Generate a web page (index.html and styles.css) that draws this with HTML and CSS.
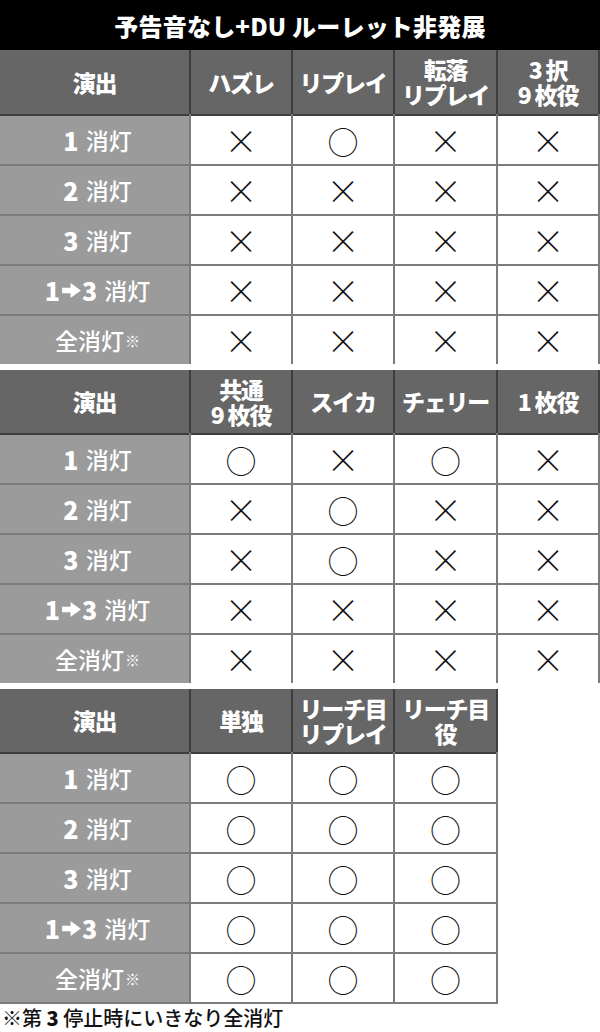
FILE: index.html
```html
<!DOCTYPE html>
<html lang="ja">
<head>
<meta charset="utf-8">
<title>予告音なし+DU ルーレット非発展</title>
<link rel="stylesheet" href="styles.css">
</head>
<body>
<div class="title">予告音なし+DU ルーレット非発展</div>

<div class="tbl c5 first">
  <div class="h">演出</div>
  <div class="h">ハズレ</div>
  <div class="h">リプレイ</div>
  <div class="h"><span class="ln">転落</span><span class="ln">リプレイ</span></div>
  <div class="h"><span class="ln">3&nbsp;択</span><span class="ln">9&nbsp;枚役</span></div>

  <div class="lb"><b>1</b>&nbsp;消灯</div>
  <div class="c"><span class="x">×</span></div><div class="c"><span class="o">○</span></div><div class="c"><span class="x">×</span></div><div class="c"><span class="x">×</span></div>
  <div class="lb"><b>2</b>&nbsp;消灯</div>
  <div class="c"><span class="x">×</span></div><div class="c"><span class="x">×</span></div><div class="c"><span class="x">×</span></div><div class="c"><span class="x">×</span></div>
  <div class="lb"><b>3</b>&nbsp;消灯</div>
  <div class="c"><span class="x">×</span></div><div class="c"><span class="x">×</span></div><div class="c"><span class="x">×</span></div><div class="c"><span class="x">×</span></div>
  <div class="lb"><b>1</b><svg class="arr" viewBox="0 0 20 16"><path d="M0 5h9V0l11 8-11 8v-5H0z"/></svg><b>3</b>&nbsp;消灯</div>
  <div class="c"><span class="x">×</span></div><div class="c"><span class="x">×</span></div><div class="c"><span class="x">×</span></div><div class="c"><span class="x">×</span></div>
  <div class="lb all">全消灯<span class="kome">※</span></div>
  <div class="c"><span class="x">×</span></div><div class="c"><span class="x">×</span></div><div class="c"><span class="x">×</span></div><div class="c"><span class="x">×</span></div>
</div>

<div class="tbl c5">
  <div class="h">演出</div>
  <div class="h"><span class="ln">共通</span><span class="ln">9&nbsp;枚役</span></div>
  <div class="h">スイカ</div>
  <div class="h">チェリー</div>
  <div class="h">1&nbsp;枚役</div>

  <div class="lb"><b>1</b>&nbsp;消灯</div>
  <div class="c"><span class="o">○</span></div><div class="c"><span class="x">×</span></div><div class="c"><span class="o">○</span></div><div class="c"><span class="x">×</span></div>
  <div class="lb"><b>2</b>&nbsp;消灯</div>
  <div class="c"><span class="x">×</span></div><div class="c"><span class="o">○</span></div><div class="c"><span class="x">×</span></div><div class="c"><span class="x">×</span></div>
  <div class="lb"><b>3</b>&nbsp;消灯</div>
  <div class="c"><span class="x">×</span></div><div class="c"><span class="o">○</span></div><div class="c"><span class="x">×</span></div><div class="c"><span class="x">×</span></div>
  <div class="lb"><b>1</b><svg class="arr" viewBox="0 0 20 16"><path d="M0 5h9V0l11 8-11 8v-5H0z"/></svg><b>3</b>&nbsp;消灯</div>
  <div class="c"><span class="x">×</span></div><div class="c"><span class="x">×</span></div><div class="c"><span class="x">×</span></div><div class="c"><span class="x">×</span></div>
  <div class="lb all">全消灯<span class="kome">※</span></div>
  <div class="c"><span class="x">×</span></div><div class="c"><span class="x">×</span></div><div class="c"><span class="x">×</span></div><div class="c"><span class="x">×</span></div>
</div>

<div class="tbl c4">
  <div class="h">演出</div>
  <div class="h">単独</div>
  <div class="h"><span class="ln">リーチ目</span><span class="ln">リプレイ</span></div>
  <div class="h"><span class="ln">リーチ目</span><span class="ln">役</span></div>

  <div class="lb"><b>1</b>&nbsp;消灯</div>
  <div class="c"><span class="o">○</span></div><div class="c"><span class="o">○</span></div><div class="c"><span class="o">○</span></div>
  <div class="lb"><b>2</b>&nbsp;消灯</div>
  <div class="c"><span class="o">○</span></div><div class="c"><span class="o">○</span></div><div class="c"><span class="o">○</span></div>
  <div class="lb"><b>3</b>&nbsp;消灯</div>
  <div class="c"><span class="o">○</span></div><div class="c"><span class="o">○</span></div><div class="c"><span class="o">○</span></div>
  <div class="lb"><b>1</b><svg class="arr" viewBox="0 0 20 16"><path d="M0 5h9V0l11 8-11 8v-5H0z"/></svg><b>3</b>&nbsp;消灯</div>
  <div class="c"><span class="o">○</span></div><div class="c"><span class="o">○</span></div><div class="c"><span class="o">○</span></div>
  <div class="lb all">全消灯<span class="kome">※</span></div>
  <div class="c"><span class="o">○</span></div><div class="c"><span class="o">○</span></div><div class="c"><span class="o">○</span></div>
</div>

<p class="note">※第 <b>3</b> 停止時にいきなり全消灯</p>
</body>
</html>
```

FILE: styles.css
```css
html, body {
  margin: 0;
  padding: 0;
  background: #fff;
}
body {
  width: 600px;
  font-family: "Noto Sans CJK JP", "Noto Sans", sans-serif;
  color: #fff;
}
.title {
  height: 50px;
  background: #000;
  color: #fff;
  font-size: 24px;
  font-weight: 900;
  display: flex;
  align-items: center;
  justify-content: center;
  letter-spacing: 0.2px;
}
.tbl {
  display: grid;
  gap: 2px;
  background: #7b7b7b;
  padding-right: 2px;
  grid-auto-rows: 48px;
  grid-template-rows: 63px;
  margin-bottom: 6px;
}
.tbl.first {
  grid-template-rows: 64px;
}
.c5 {
  width: 598px;
  grid-template-columns: 189px 100px 100px 101px 100px;
}
.c4 {
  width: 496px;
  grid-template-columns: 189px 100px 100px 101px;
  margin-bottom: 0;
  padding-bottom: 2px;
}
.h {
  background: #666;
  box-shadow: 2px 0 0 #3e3e3e, 0 2px 0 #3e3e3e;
  color: #fff;
  font-size: 23px;
  font-weight: 900;
  line-height: 25px;
  display: flex;
  flex-direction: column;
  align-items: center;
  justify-content: center;
  text-align: center;
  letter-spacing: -1.2px;
}
.ln {
  display: block;
}
.lb {
  background: #9b9b9b;
  color: #fff;
  font-size: 23px;
  font-weight: 500;
  display: flex;
  align-items: center;
  justify-content: center;
  padding-left: 6px;
}
.lb b {
  font-weight: 900;
  font-size: 25px;
  margin-right: 2px;
}
.lb .arr {
  width: 19px;
  height: 15px;
  fill: #fff;
  margin: 0 1px 0 0;
}
.kome {
  font-size: 15px;
  margin-left: 1px;
  font-weight: 700;
}
.c {
  background: #fff;
  color: #111;
  display: flex;
  align-items: center;
  justify-content: center;
}
.x {
  font-size: 33px;
  line-height: 1;
  font-weight: 200;
}
.o {
  font-size: 31px;
  line-height: 1;
  font-weight: 300;
}
.note {
  margin: 0;
  padding-left: 2px;
  color: #111;
  font-size: 20px;
  font-weight: 500;
  line-height: 27px;
  letter-spacing: 0;
}
.note b {
  font-weight: 900;
}
```
